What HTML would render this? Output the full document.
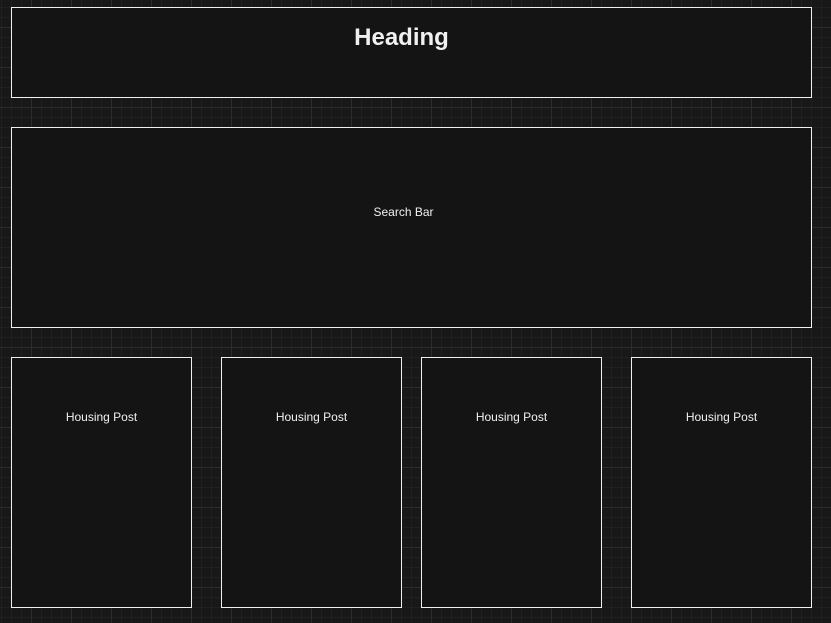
<!DOCTYPE html>
<html><head><style>
html,body{margin:0;padding:0}
body{width:831px;height:623px;position:relative;overflow:hidden;background-color:#181818;
background-image:
linear-gradient(to right,#2c2c2c 1px,transparent 1px),
linear-gradient(to bottom,#2c2c2c 1px,transparent 1px),
linear-gradient(to right,#202020 1px,transparent 1px),
linear-gradient(to bottom,#202020 1px,transparent 1px);
background-size:40px 40px,40px 40px,10px 10px,10px 10px;
background-position:31px 27px,31px 27px,1px 7px,1px 7px;
font-family:"Liberation Sans",Helvetica,Arial,sans-serif;color:#f0f0f0}
.b{position:absolute;box-sizing:border-box;border:1px solid #f0f0f0;background:#141414;text-align:center;font-size:12px}
</style></head><body>
<div class="b" style="left:11px;top:7px;width:801px;height:91px"><div style="font-weight:bold;font-size:24px;margin-top:16px;margin-right:20px">Heading</div></div>
<div class="b" style="left:11px;top:127px;width:801px;height:201px"><div style="margin-top:77px;margin-right:16px">Search Bar</div></div>
<div class="b" style="left:11px;top:357px;width:181px;height:251px"><div style="margin-top:52px">Housing Post</div></div>
<div class="b" style="left:221px;top:357px;width:181px;height:251px"><div style="margin-top:52px">Housing Post</div></div>
<div class="b" style="left:421px;top:357px;width:181px;height:251px"><div style="margin-top:52px">Housing Post</div></div>
<div class="b" style="left:631px;top:357px;width:181px;height:251px"><div style="margin-top:52px">Housing Post</div></div>
</body></html>
